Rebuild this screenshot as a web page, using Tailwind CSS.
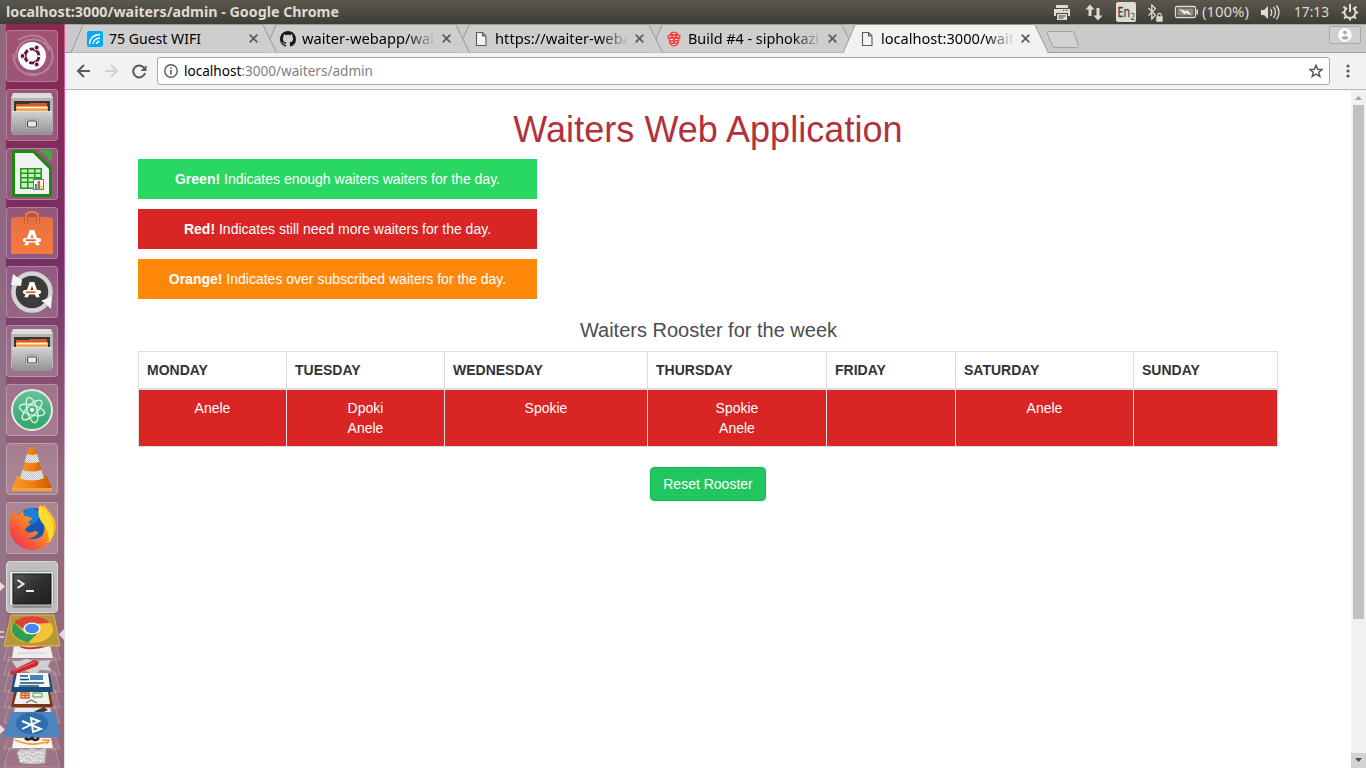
<!DOCTYPE html>
<html lang="en">
<head>
<meta charset="utf-8">
<title>localhost:3000/waiters/admin - Google Chrome</title>
<script src="https://cdn.jsdelivr.net/npm/@tailwindcss/browser@4"></script>
</head>
<body class="w-[1366px] h-[768px] overflow-hidden flex flex-col bg-white font-['Noto_Sans',sans-serif]">
<svg width="0" height="0" class="absolute" aria-hidden="true">
  <defs>
    <linearGradient id="metal" x1="0" y1="0" x2="0" y2="1"><stop offset="0" stop-color="#d2d2d2"/><stop offset="1" stop-color="#929292"/></linearGradient>
    <linearGradient id="bag" x1="0" y1="0" x2="0" y2="1"><stop offset="0" stop-color="#e8703f"/><stop offset="1" stop-color="#f47b3d"/></linearGradient>
    <linearGradient id="atomg" x1="0" y1="0" x2="0" y2="1"><stop offset="0" stop-color="#67c29a"/><stop offset="1" stop-color="#2fa468"/></linearGradient>
    <linearGradient id="cone" x1="0" y1="0" x2="1" y2="0"><stop offset="0" stop-color="#f79b2a"/><stop offset=".5" stop-color="#f08010"/><stop offset="1" stop-color="#c85a05"/></linearGradient>
    <linearGradient id="fox" x1="1" y1="0" x2="0" y2="1"><stop offset="0" stop-color="#ffe226"/><stop offset=".4" stop-color="#ff9a1f"/><stop offset=".7" stop-color="#f8553b"/><stop offset="1" stop-color="#e8255f"/></linearGradient>
    <linearGradient id="term" x1="0" y1="0" x2="1" y2="1"><stop offset="0" stop-color="#565656"/><stop offset=".5" stop-color="#303030"/><stop offset="1" stop-color="#1e1e1e"/></linearGradient>
    <pattern id="chk" width="2" height="2" patternUnits="userSpaceOnUse"><rect width="2" height="2" fill="#f2f2f2"/><rect width="1" height="1" fill="#b9c0c4"/><rect x="1" y="1" width="1" height="1" fill="#b9c0c4"/></pattern>
    <symbol id="files" viewBox="0 0 52 52">
      <path d="M7 4h38l2 5H5z" fill="#dcdcdc"/><path d="M5 9h42v34H5z" fill="#b5b5b5"/><path d="M8 12h36v12H8z" fill="#363636"/>
      <path d="M10 15h13l1-1h17v9H10z" fill="#d5592a"/><path d="M10 17h32v6H10z" fill="#f0a24c"/><path d="M11 18h30v1.300H11z" fill="#fff5df"/>
      <path d="M6 22h40v24H6z" fill="url(#metal)"/><path d="M6 22h40v1H6z" fill="#e4e4e4"/>
      <rect x="19.500" y="30" width="13" height="10" rx="2" fill="#c9c9c9" stroke="#8b8b8b" stroke-width=".7"/><rect x="21.500" y="32" width="9" height="6" rx="1" fill="#e9e9e9" stroke="#4d4d4d" stroke-width="1.200"/>
    </symbol>
    <symbol id="softa" viewBox="0 0 20 18">
      <path d="M7.500 0h5l6 17h-4l-1.200-3H6.700L5.500 17h-4zM10 4.500L8.300 9h3.400z" fill="#fff"/><rect x="0" y="9" width="20" height="4.500" rx="2" fill="#fff"/><rect x="3" y="10.500" width="11" height="2" fill="#e8621f"/>
    </symbol>
    <symbol id="page" viewBox="0 0 12 16"><path d="M1.500 1.500h6l3.500 3.500v9.500h-9.500zM7.500 1.500v3.500h3.500" fill="#f4f4f4" stroke="#5a5a5a" stroke-width="1.100"/></symbol>
    <symbol id="close" viewBox="0 0 8 8"><path d="M.6.600l6.800 6.800M7.400.600L.6 7.400" stroke="#5a5a5a" stroke-width="1.500"/></symbol>
  </defs>
</svg>

<!-- system panel -->
<header class="h-6 shrink-0 flex items-center justify-between bg-linear-to-b from-[#5b574d] to-[#3e3d38] text-[#dfdbd2]">
  <div class="pl-[6px] text-[13.500px] font-bold leading-6"><svg class="block" width="340" height="24"><text x="0" y="17" fill="#dfdbd2" font-size="14" textLength="333" lengthAdjust="spacingAndGlyphs">localhost:3000/waiters/admin - Google Chrome</text></svg></div>
  <svg class="block" width="326" height="24" viewBox="1040 0 326 24" fill="#dfdbd2">
    <path d="M1056 5h12v3h-12zM1054 9h16v7h-2v-3h-12v3h-2zM1057 14h10v6h-10z"/><path d="M1058.500 16h7M1058.500 18h5M1063 10.500h1.500M1066 10.500h1.500M1056 8.500h12" stroke="#4a4842"/>
    <path d="M1090 4.500l4.500 5h-3v6.500h-3V9.500h-3zM1098 20.500l-4.500-5h3V8h3v7.500h3z"/>
    <rect x="1116" y="2" width="20" height="20" rx="2"/><text x="1117.500" y="17" font-size="13.500" fill="#45433e" textLength="12.500" lengthAdjust="spacingAndGlyphs" stroke="#45433e" stroke-width=".3">En</text><text x="1130.500" y="20" font-size="8" fill="#45433e">2</text>
    <path d="M1148.500 8l7 7-3.700 4V5l3.700 3.500-7 7" fill="none" stroke="#dfdbd2" stroke-width="1.300"/><rect x="1156" y="16" width="7" height="6" rx=".8" stroke="#45433e" stroke-width=".5"/><path d="M1157.700 16.500v-1.300a1.800 1.800 0 0 1 3.600 0v1.300" fill="none" stroke="#dfdbd2" stroke-width="1.200"/>
    <rect x="1175.500" y="6.500" width="20" height="11" rx="1.500" fill="none" stroke="#dfdbd2" stroke-width="1.300"/><rect x="1177.500" y="8.500" width="16" height="7" fill="#8f8c85"/><path d="M1196.500 9.500h1.500v5h-1.500z"/><path d="M1179 8.500l7 3 1-1.500 5 5.500-6-2.500-1.500 1.500z" fill="#f4f2ee"/>
    <text x="1202" y="17" font-size="14" textLength="47" lengthAdjust="spacingAndGlyphs">(100%)</text>
    <path d="M1261 10h3l4-4v13l-4-4h-3z"/><path d="M1270.500 9q2.500 3.500 0 7M1273.500 7q4 5.500 0 11M1276.500 5.500q5 7 0 14" fill="none" stroke="#dfdbd2" stroke-width="1.300"/>
    <text x="1294" y="17" font-size="14" textLength="35" lengthAdjust="spacingAndGlyphs">17:13</text>
    <g fill="none" stroke="#dfdbd2"><path d="M1347 7.800a5.500 5.500 0 1 0 6 0" stroke-width="2"/><path d="M1350 4v8" stroke-width="2"/><path d="M1343.500 6.500l2 2M1356.500 6.500l-2 2M1341.800 12.500h2.500M1355.700 12.500h2.500M1344 18.500l2-2M1356 18.500l-2-2M1350 18v2.500" stroke-width="2"/></g>
  </svg>
</header>

<div class="flex flex-1 min-h-0">
  <!-- launcher -->
  <aside class="relative w-[65px] shrink-0 flex flex-col gap-[7px] pt-[6px] pl-[6px] bg-linear-to-b from-[#8a2850] from-0% via-[#763065] via-32% to-[#95687b] to-62% overflow-hidden">
    <div class="absolute inset-y-0 left-0 w-[6px] bg-[#94778a]/80"></div>
    <div class="absolute right-0 inset-y-0 w-px bg-linear-to-b from-[#e0568f] from-10% via-[#a865cf] via-40% to-[#eadfe4] to-75%"></div>
    <div class="relative size-[52px] rounded-[4px] border border-white/25 bg-white/20 shrink-0"><svg class="-m-px block" width="52" height="52"><path d="M10 28C8 8 36 2 43 20M44 16c8 18-6 32-22 27M7 24c2 20 20 28 36 14M12 10c14-8 28-6 32 10" fill="none" stroke="#fff" stroke-opacity=".25" stroke-width="2"/><circle cx="26" cy="26" r="14" fill="#fff"/><circle cx="26" cy="26" r="7" fill="none" stroke="#6a1b3e" stroke-width="3" stroke-dasharray="12.700 2" stroke-dashoffset="-1"/><g fill="#6a1b3e" stroke="#fff"><circle cx="16.500" cy="26" r="2.500"/><circle cx="30.700" cy="17.500" r="2.500"/><circle cx="30.700" cy="34.500" r="2.500"/></g></svg></div>
    <div class="relative size-[52px] rounded-[4px] border border-white/25 bg-white/20 shrink-0"><svg class="-m-px block" width="52" height="52"><use href="#files"/></svg></div>
    <div class="relative size-[52px] rounded-[4px] border border-white/25 bg-white/20 shrink-0"><svg class="-m-px block" width="52" height="52"><path d="M8 2h20l18 17v28q0 2-2 2H8q-2 0-2-2V4q0-2 2-2z" fill="#198a14"/><path d="M34 2h10q2 0 2 2v10z" fill="#38b035"/><path d="M9 5h18l16 16v25H9z" fill="#f2f2f2"/><path d="M14 20h22v21H14z" fill="#1f9a1b"/><path d="M15.500 21.500h5.500v3h-5.500zM22.500 21.500h5.500v3h-5.500zM29.500 21.500h5v3h-5zM15.500 26h5.500v3h-5.500zM22.500 26h5.500v3h-5.500zM29.500 26h5v3h-5zM15.500 30.500h5.500v3h-5.500zM22.500 30.500h5.500v3h-5.500zM15.500 35h5.500v4.500h-5.500zM22.500 35h5.500v4.500h-5.500z" fill="#c9f0be"/><rect x="27.500" y="31.500" width="10" height="10" fill="#fff" stroke="#777"/><path d="M29 36h2v5h-2z" fill="#1a9be0"/><path d="M31.500 33h2.500v8h-2.500z" fill="#e0601c"/><path d="M34.500 37.500h2v3.500h-2z" fill="#f1c40f"/></svg></div>
    <div class="relative size-[52px] rounded-[4px] border border-white/25 bg-white/20 shrink-0"><svg class="-m-px block" width="52" height="52"><path d="M5 12l3-2h36l3 2v35H5z" fill="url(#bag)"/><path d="M20 17V9q0-4 6-4t6 4v8" fill="none" stroke="#c9501f" stroke-width="3.500"/><path d="M20 17V9q0-4 6-4t6 4v8" fill="none" stroke="#f08a5c" stroke-width="1.500"/><use href="#softa" x="17" y="22" width="18" height="18"/></svg></div>
    <div class="relative size-[52px] rounded-[4px] border border-white/25 bg-white/20 shrink-0"><svg class="-m-px block" width="52" height="52"><circle cx="26" cy="26" r="18.500" fill="#3b3b3b" stroke="#d4d4d4" stroke-width="4.500"/><path d="M7 8l4 3 5 3-1 6-10-1zM46 30l-11 5 4 2 6 6z" fill="#f4f4f4"/><use href="#softa" x="17" y="15" width="18" height="18"/></svg></div>
    <div class="relative size-[52px] rounded-[4px] border border-white/25 bg-white/20 shrink-0"><svg class="-m-px block" width="52" height="52"><use href="#files"/></svg></div>
    <div class="relative size-[52px] rounded-[4px] border border-white/25 bg-white/20 shrink-0"><svg class="-m-px block" width="52" height="52"><circle cx="26" cy="26" r="20" fill="url(#atomg)" stroke="#e8e8e8" stroke-width="2"/><g fill="none" stroke="#d6f3e2" stroke-width="1.400"><ellipse cx="26" cy="26" rx="13" ry="5" transform="rotate(15 26 26)"/><ellipse cx="26" cy="26" rx="13" ry="5" transform="rotate(75 26 26)"/><ellipse cx="26" cy="26" rx="13" ry="5" transform="rotate(135 26 26)"/></g><circle cx="26" cy="26" r="2" fill="#fff"/></svg></div>
    <div class="relative size-[52px] rounded-[4px] border border-white/25 bg-white/20 shrink-0"><svg class="-m-px block" width="52" height="52"><path d="M11 33h30l5 12v3H6v-3z" fill="url(#cone)"/><path d="M6 45h40v3H6z" fill="#f7a13c"/><path d="M24 4h4q1 0 1.500 2L38 36q-12 5-24 0L22.500 6q.5-2 1.500-2z" fill="url(#cone)"/><path d="M21 11q5 2 10 0l2.500 8q-7.500 2-15 0zM16.500 27q9.500 3 19 0l2.500 8.500q-12 4-24 0z" fill="url(#chk)"/></svg></div>
    <div class="relative size-[52px] rounded-[4px] border border-white/25 bg-white/20 shrink-0"><svg class="-m-px block" width="52" height="52"><circle cx="27" cy="25" r="19" fill="#1459b8"/><circle cx="25" cy="14" r="8" fill="#1e7fd8"/><path d="M7 8q1 4 4 5 4-1 6-5l1 6q3 0 8 2-1 3-5 4l4 2-6 5q2 5 7 3l3-1q3 0 3 2-3 5-10 5 8 3 14-2 5-7 0-17-3-7 2-14l10 13q4 9-1 19-7 13-21 13Q8 46 4 30 3 16 7 8z" fill="url(#fox)"/><path d="M34 3q10 8 13 20 2 10-4 18 0-13-8-22-5-7-1-16z" fill="#ffdc2c"/></svg></div>
    <div class="relative size-[52px] rounded-[4px] border border-[#d8d8d8] bg-[#bebebe] shrink-0"><svg class="-m-px block" width="52" height="52"><path d="M5 11h42v30l-2 6H7l-2-6z" fill="#8e8e8e"/><rect x="3.500" y="10.500" width="44" height="34" rx="1" fill="#e7e7e7" stroke="#a2a2a2"/><rect x="7" y="13" width="38" height="30" fill="url(#term)" stroke="#111"/><path d="M11.500 19l6 4-6 4" fill="none" stroke="#eee" stroke-width="2"/><path d="M20 30h8" stroke="#eee" stroke-width="2"/></svg></div>
    <svg class="absolute left-0 top-[533px]" width="65" height="211" viewBox="0 557 65 211">
      <path d="M0 582l5 4.500-5 4.500zM0 725l5 4.500-5 4.500zM64 629v11l-5-5.500z" fill="#e2dde0"/><path d="M0 632h4M0 637h4" stroke="#e2dde0" stroke-width="1.500"/>
      <g fill="#fff" fill-opacity=".09" stroke="#fff" stroke-opacity=".22"><path d="M9 640h46l5 20H4zM9 657h46l5 18H4zM9 672h46l5 20H4zM9 690h46l5 18H4zM9 706h46l5 17H4zM9 735h46l5 14H4zM9 748h46l5 19H4z"/></g>
      <path d="M14 645h36l3 13H12z" fill="#ededed"/><path d="M20 646q4 3 14 2t16-4" fill="none" stroke="#d52b2b" stroke-width="2"/><path d="M18 653h28" stroke="#ccc"/>
      <path d="M12 661l8 0 6-2 9 2 16-1-3 6 4 5-12-1-5 5-9-4-7 1z" fill="#cfcfcf"/><path d="M11 671l23-11 5 2-2 4-24 9q-4-1-2-4z" fill="#d0262c"/><path d="M13 671l22-9" stroke="#f17070"/>
      <path d="M14 674h36l3 18H11z" fill="#164f78"/><path d="M17 673h31l2 14H14z" fill="#f5f5f5"/><path d="M20 676h8M20 679.500h9M20 683h24M19 686h20" stroke="#164f78" stroke-width="1.300"/><path d="M30 675h13v5H30z" fill="#3c87b5"/>
      <path d="M14 692h36l3 15H11z" fill="#7c3512"/><path d="M17 692h31l2 12H14z" fill="#f2eee9"/><path d="M21 693h8v5h-8zM25 693v5M21 695.500h8" fill="none" stroke="#cd5d25" stroke-width="1.300"/><path d="M33 693h9v4h-9z" fill="none" stroke="#4d9a4d"/><path d="M26 703l5-3 6 3" fill="none" stroke="#777" stroke-width="1.300"/>
      <path d="M15 708h35l3 12H12z" fill="#e7e7e7"/><path d="M18 714h12" stroke="#aaa"/><path d="M30 716l5-5 9-4 4 3-11 5z" fill="#3c3c3c"/><path d="M30 716l5-5 3 4z" fill="#e1bb61"/>
      <path d="M11 712h44l5 25H4z" fill="#4e84bf"/><ellipse cx="32" cy="723.500" rx="16" ry="11" fill="#2f6ead"/><path d="M22 721l19 8-8 3-2-14 8 3-17 8" fill="none" stroke="#fff" stroke-width="1.900"/>
      <path d="M14 738h37l2 10H12z" fill="#f5f5f5"/><path d="M25 738q3 3 7 0 3 4 7 0" fill="none" stroke="#222" stroke-width="2.500"/><path d="M15 740q15 7 32 2M42 740h7l-2 4" fill="none" stroke="#f59a1c" stroke-width="1.600"/>
      <path d="M17 752l4-3 6 1 5-2 6 2 8-2-1 15q-12 2-25 0z" fill="#c9c9c6"/><path d="M18 753l5 2 4-3 6 3 5-3 6 2M19 757l4 2 5-3 5 3 6-3 5 2M20 761l5-1 5 2 6-2 7 1" fill="none" stroke="#f0f0ee" stroke-width="1.300" stroke-dasharray="3 1"/>
      <path d="M11 615h43l6 31H4z" fill="#b5973a" stroke="#d1b864"/><ellipse cx="32" cy="629.500" rx="21" ry="13.500" fill="#f3c334"/><path d="M14 622.500Q20 616 32 616t18 7l-18 1-9 5z" fill="#d84436"/><path d="M14 622.500q-8 14 14 20.300L38 633l-12 1z" fill="#2f9e58"/><ellipse cx="32" cy="628.500" rx="8.700" ry="6" fill="#fff"/><ellipse cx="32" cy="628.500" rx="7" ry="4.800" fill="#4688f1"/>
    </svg>
  </aside>

  <main class="flex-1 min-w-0 flex flex-col">
    <!-- tab strip -->
    <nav class="relative h-[29px] shrink-0 flex pl-[6px] bg-[#cacaca] border-b border-[#a0a0a0] border-t border-t-[#a6a6a6] text-black">
      <div class="relative z-40 w-[206px] -mr-[13px] -mt-px h-[29px] shrink-0 flex items-center pl-4"><svg class="absolute inset-0" width="206" height="29"><path d="M0 28.500L12 1q.5-.5 1-.5h178q.7 0 1 .7L205.500 28.500" fill="#cecece" stroke="#999"/></svg><svg class="relative" width="16" height="16"><rect width="16" height="16" rx="2.500" fill="#00a9f4"/><path d="M2.500 13Q3 4 13 3.500M6 13Q6.500 7.500 13 7M9.500 13q.5-2.500 3-2.800" fill="none" stroke="#fff" stroke-width="1.400"/></svg><svg class="relative ml-[6px]" width="134" height="28"><text x="0" y="19" font-size="14" textLength="92" lengthAdjust="spacingAndGlyphs">75 Guest WIFI</text></svg><svg class="relative ml-[6px]" width="9" height="9"><use href="#close"/></svg></div>
      <div class="relative z-30 w-[206px] -mr-[13px] -mt-px h-[29px] shrink-0 flex items-center pl-4"><svg class="absolute inset-0" width="206" height="29"><path d="M0 28.500L12 1q.5-.5 1-.5h178q.7 0 1 .7L205.500 28.500" fill="#cecece" stroke="#999"/></svg><svg class="relative" width="16" height="16" viewBox="0 0 16 16"><path fill="#191919" d="M8 0C3.580 0 0 3.580 0 8c0 3.540 2.290 6.530 5.470 7.590.4.070.55-.17.55-.38 0-.19-.01-.82-.01-1.490-2.010.37-2.530-.49-2.690-.94-.09-.23-.48-.94-.82-1.130-.28-.15-.68-.52-.01-.53.63-.01 1.080.58 1.230.82.72 1.210 1.870.87 2.330.66.07-.52.28-.87.51-1.070-1.780-.2-3.640-.89-3.640-3.950 0-.87.31-1.590.82-2.150-.08-.2-.36-1.020.08-2.120 0 0 .67-.21 2.200.82.64-.18 1.320-.27 2-.27s1.360.09 2 .27c1.530-1.040 2.200-.82 2.200-.82.44 1.100.16 1.920.08 2.120.51.56.82 1.270.82 2.150 0 3.070-1.870 3.750-3.650 3.950.29.25.54.73.54 1.480 0 1.070-.01 1.930-.01 2.200 0 .21.15.46.55.38A8.010 8.010 0 0 0 16 8c0-4.420-3.580-8-8-8z"/></svg><svg class="relative ml-[6px] mask-r-from-78% mask-r-to-100%" width="134" height="28"><text x="0" y="19" font-size="14" textLength="132" lengthAdjust="spacingAndGlyphs">waiter-webapp/wai</text></svg><svg class="relative ml-[6px]" width="9" height="9"><use href="#close"/></svg></div>
      <div class="relative z-20 w-[206px] -mr-[13px] -mt-px h-[29px] shrink-0 flex items-center pl-4"><svg class="absolute inset-0" width="206" height="29"><path d="M0 28.500L12 1q.5-.5 1-.5h178q.7 0 1 .7L205.500 28.500" fill="#cecece" stroke="#999"/></svg><svg class="relative" width="16" height="16"><use href="#page" x="2" width="12" height="16"/></svg><svg class="relative ml-[6px] mask-r-from-78% mask-r-to-100%" width="134" height="28"><text x="0" y="19" font-size="14" textLength="136" lengthAdjust="spacingAndGlyphs">https://waiter-weba</text></svg><svg class="relative ml-[6px]" width="9" height="9"><use href="#close"/></svg></div>
      <div class="relative z-10 w-[206px] -mr-[13px] -mt-px h-[29px] shrink-0 flex items-center pl-4"><svg class="absolute inset-0" width="206" height="29"><path d="M0 28.500L12 1q.5-.5 1-.5h178q.7 0 1 .7L205.500 28.500" fill="#cecece" stroke="#999"/></svg><svg class="relative" width="16" height="16"><path d="M4 2q4-3 8 0l1 2h1.500v3.500H13.500q0 4-1.500 6-4 4-8 0-1.500-2-1.500-6H1.500V4H3z" fill="#f04a48"/><path d="M6.500 2.500h3M3 5.500h2M7 5.500h2M11 5.500h2M4 8.500h3M9 8.500h3M5 11h2M9 11h2M6.500 13.500h3" stroke="#fbdede" stroke-width="1.200"/></svg><svg class="relative ml-[6px] mask-r-from-78% mask-r-to-100%" width="134" height="28"><text x="0" y="19" font-size="14" textLength="131" lengthAdjust="spacingAndGlyphs">Build #4 - siphokazi</text></svg><svg class="relative ml-[6px]" width="9" height="9"><use href="#close"/></svg></div>
      <div class="relative z-50 w-[206px] -mt-px h-[29px] shrink-0 flex items-center pl-4"><svg class="absolute inset-0" width="206" height="29"><path d="M0 29L12 1q.5-.5 1-.5h178q.7 0 1 .7L205.500 29" fill="#f2f2f2" stroke="#999"/></svg><svg class="relative" width="16" height="16"><use href="#page" x="2" width="12" height="16"/></svg><svg class="relative ml-[6px] mask-r-from-78% mask-r-to-100%" width="134" height="28"><text x="0" y="19" font-size="14" textLength="133" lengthAdjust="spacingAndGlyphs">localhost:3000/wait</text></svg><svg class="relative ml-[6px]" width="9" height="9"><use href="#close"/></svg></div>
      <svg class="-ml-[4px] mt-[5px]" width="36" height="20"><path d="M3 1.500h24q1.500 0 2 1l4.500 13q.5 2-1 2H10q-2 0-2.500-1.500L2 3q-.5-1.500 1-1.500z" fill="#d2d2d2" stroke="#a0a0a0"/></svg>
      <div class="ml-auto mr-[5px] mt-px w-8 h-[18px] rounded-[2px] border border-[#a9a9a9] bg-[#d0d0d0] flex items-center justify-center"><svg width="14" height="14"><circle cx="7" cy="7" r="6.800" fill="#fff"/><circle cx="7" cy="4.600" r="2" fill="#aaa"/><path d="M3 9.800q4-3.500 8 0-4 4-8 0z" fill="#aaa"/></svg></div>
    </nav>
    <!-- toolbar -->
    <div class="h-[37px] shrink-0 flex items-center bg-[#f2f2f2] border-b border-[#b6b6b6] pl-[11px] pr-[16px]">
      <svg width="15" height="14" fill="none" stroke="#5a5a5a" stroke-width="2"><path d="M14 7H2M8 1L2 7l6 6"/></svg>
      <svg class="ml-[13px]" width="15" height="14" fill="none" stroke="#d0d0d0" stroke-width="2"><path d="M1 7h12M7 1l6 6-6 6"/></svg>
      <svg class="ml-[13px]" width="15" height="15"><path d="M12.300 4.200A6 6 0 1 0 13 9" fill="none" stroke="#5a5a5a" stroke-width="2"/><path d="M14.500 1v6H8.500z" fill="#5a5a5a"/></svg>
      <div class="ml-[10px] flex-1 h-7 flex items-center rounded-[3px] border border-[#a9a9a9] bg-white pl-[6px] pr-[6px]">
        <svg width="14" height="14"><circle cx="7" cy="7" r="6.200" fill="none" stroke="#5a5a5a" stroke-width="1.400"/><path d="M6.200 6h1.600v4.500H6.200zM6.200 3.400h1.600V5H6.200z" fill="#5a5a5a"/></svg>
        <svg class="ml-[6px]" width="200" height="26"><text x="0" y="18" font-size="14" fill="#808080" textLength="189" lengthAdjust="spacingAndGlyphs"><tspan fill="#000">localhost</tspan>:3000/waiters/admin</text></svg>
        <svg class="ml-auto" width="14" height="14"><path d="M7 1.200l1.700 4 4.300.300-3.300 2.800 1.100 4.200L7 10.200l-3.800 2.300 1.100-4.200L1 5.500l4.300-.3z" fill="none" stroke="#5a5a5a" stroke-width="1.500"/></svg>
      </div>
      <svg class="ml-[16px]" width="4" height="14" fill="#5a5a5a"><circle cx="2" cy="2" r="1.600"/><circle cx="2" cy="7" r="1.600"/><circle cx="2" cy="12" r="1.600"/></svg>
    </div>
    <!-- page -->
    <div class="flex-1 min-h-0 flex bg-white">
      <div class="flex-1 font-['Liberation_Sans',Arial,sans-serif] text-sm leading-5 text-[#333]">
        <div class="w-[1140px] ml-[73px] pt-[20px]">
          <h1 class="text-center text-[36px] leading-[39px] tracking-[0.050px] text-[#b2323b]">Waiters Web Application</h1>
          <div class="mt-[10px] w-[399px] flex flex-col gap-[10px] text-center text-white">
            <p class="h-10 leading-10 bg-[#28d862]"><strong>Green!</strong> Indicates enough waiters waiters for the day.</p>
            <p class="h-10 leading-10 bg-[#d92523]"><strong>Red!</strong> Indicates still need more waiters for the day.</p>
            <p class="h-10 leading-10 bg-[#ff870a]"><strong>Orange!</strong> Indicates over subscribed waiters for the day.</p>
          </div>
          <h2 class="mt-[20px] pl-px text-center text-[20px] leading-[22px] text-[#4b4d52]">Waiters Rooster for the week</h2>
          <div class="mt-[10px] bg-[#ddd] p-px flex flex-col gap-[2px]">
            <div class="grid grid-cols-[147px_157px_202px_178px_128px_177px_143px] gap-px font-bold h-9">
              <div class="bg-white p-2">MONDAY</div><div class="bg-white p-2">TUESDAY</div><div class="bg-white p-2">WEDNESDAY</div><div class="bg-white p-2">THURSDAY</div><div class="bg-white p-2">FRIDAY</div><div class="bg-white p-2">SATURDAY</div><div class="bg-white p-2">SUNDAY</div>
            </div>
            <div class="grid grid-cols-[147px_157px_202px_178px_128px_177px_143px] gap-px text-center text-white h-14">
              <div class="bg-[#d92523] p-2">Anele</div><div class="bg-[#d92523] p-2">Dpoki<br>Anele</div><div class="bg-[#d92523] p-2">Spokie</div><div class="bg-[#d92523] p-2">Spokie<br>Anele</div><div class="bg-[#d92523] p-2"></div><div class="bg-[#d92523] p-2">Anele</div><div class="bg-[#d92523] p-2"></div>
            </div>
          </div>
          <div class="mt-5 flex justify-center"><button class="h-[34px] px-3 rounded-[4px] border border-[#0fb551] bg-[#22c65e] text-white">Reset Rooster</button></div>
        </div>
      </div>
      <div class="w-[15px] shrink-0 bg-[#f1f1f1] flex flex-col items-center">
        <svg width="15" height="15"><path d="M4 10h7L7.500 6z" fill="#a3a3a3"/></svg>
        <div class="w-[11px] h-[514px] bg-[#c1c1c1]"></div>
        <svg class="mt-auto bg-[#d2d2d2]" width="15" height="15"><path d="M4 5h7L7.500 9z" fill="#505050"/></svg>
      </div>
    </div>
  </main>
</div>
</body>
</html>
